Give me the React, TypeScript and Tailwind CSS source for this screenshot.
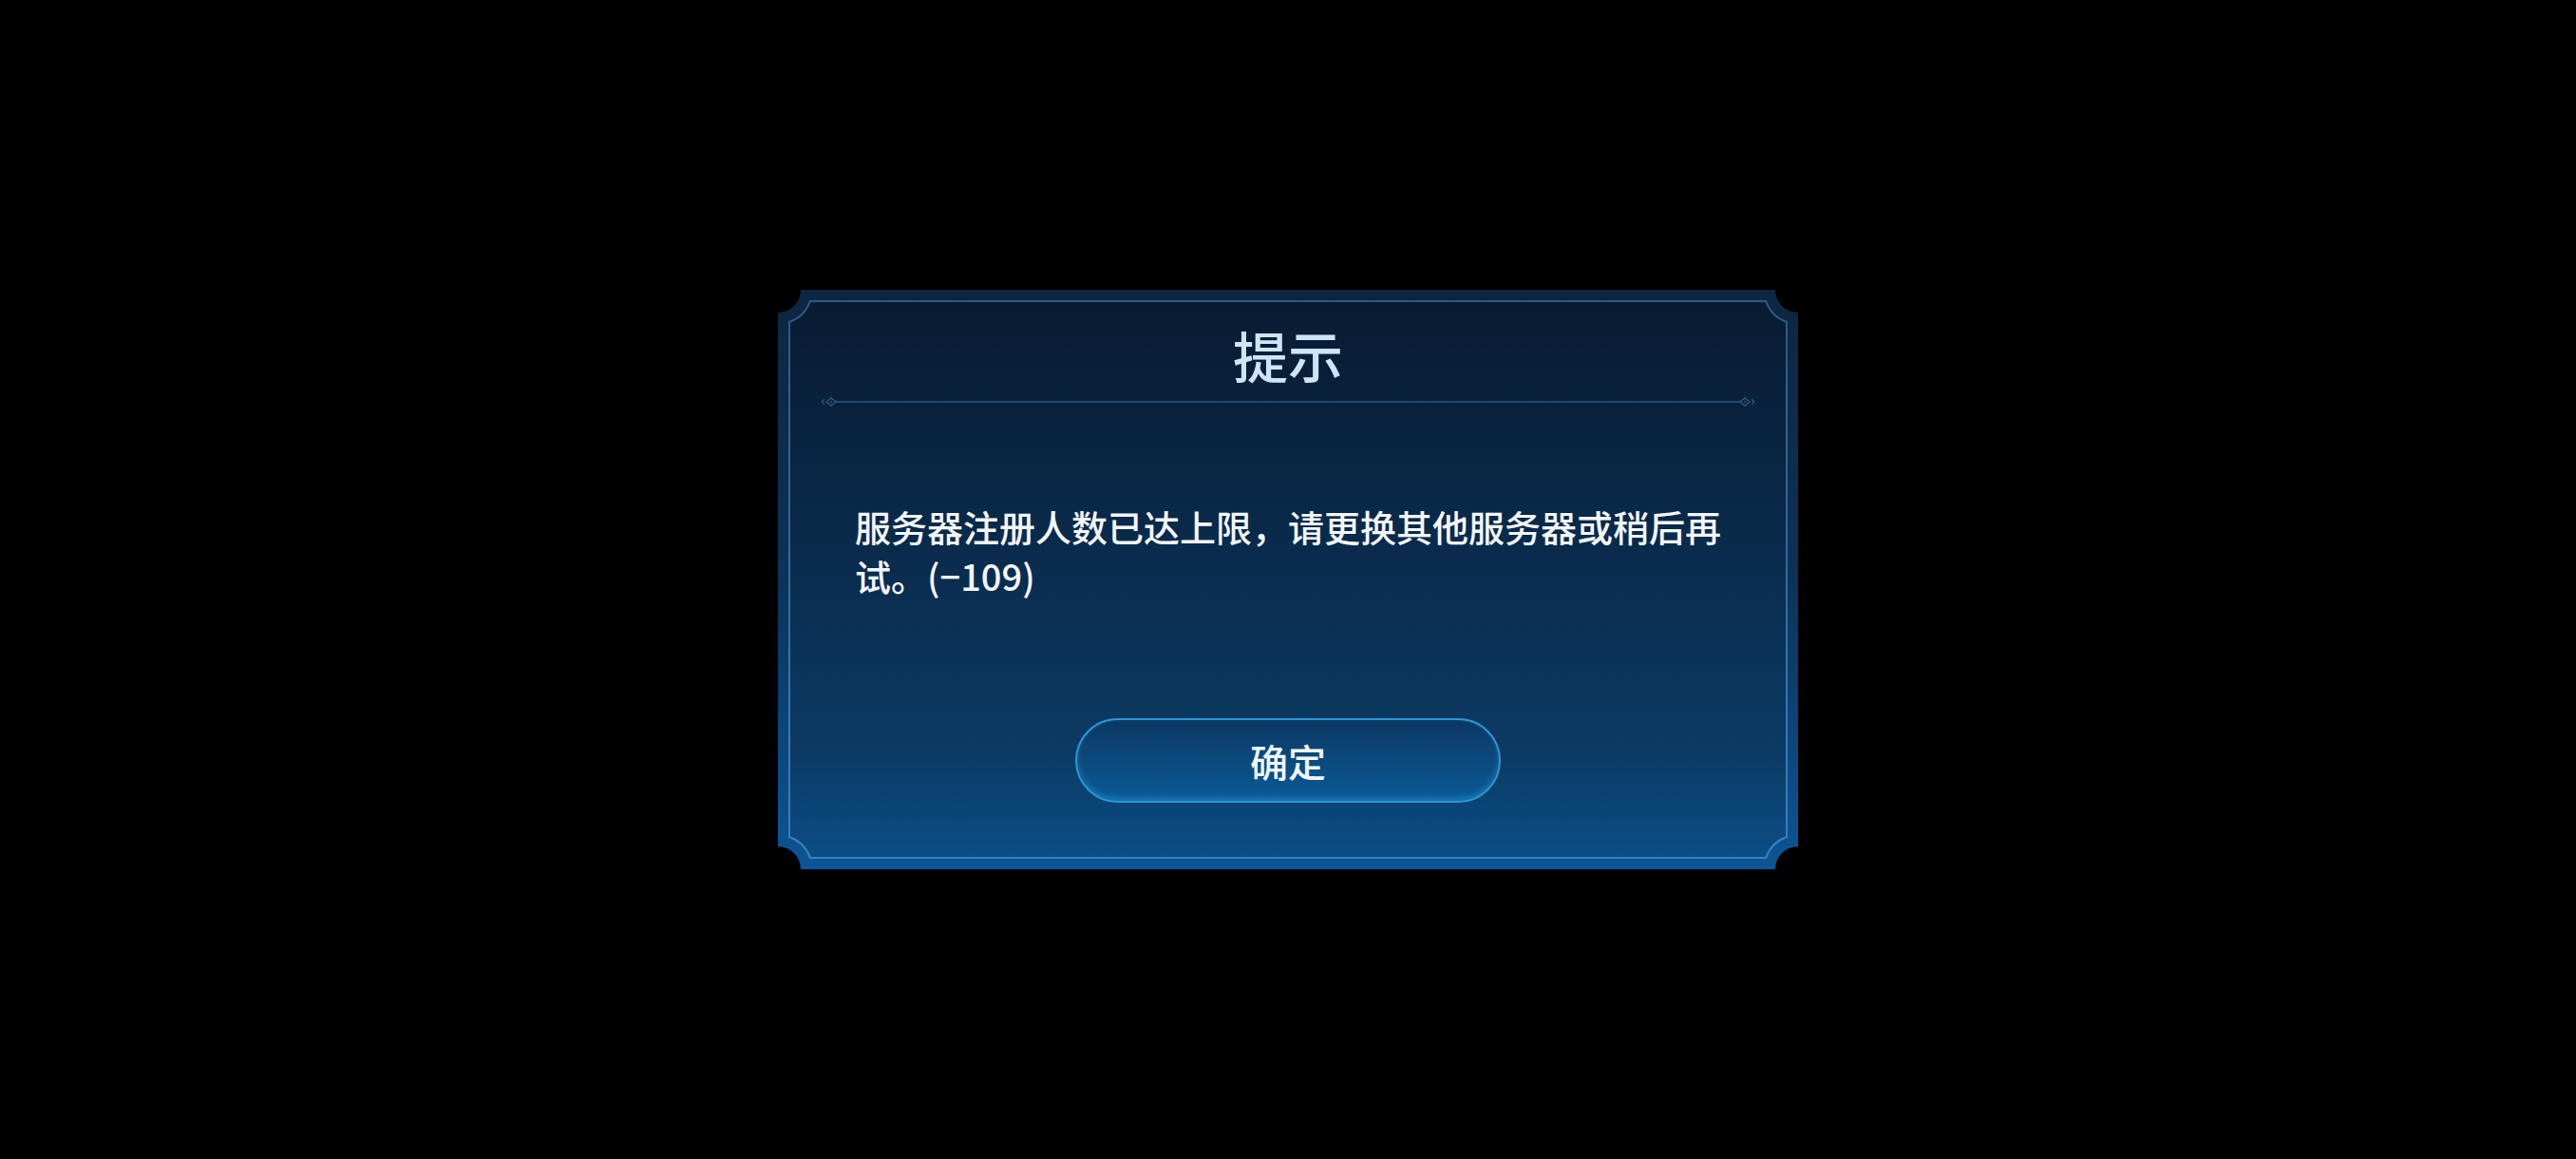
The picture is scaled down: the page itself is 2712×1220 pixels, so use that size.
import React from "react";

function Frame() {
  const W = 1074;
  const H = 610;
  const r = 24;
  const d = 12;
  const R = 36;
  const e = Math.sqrt(R * R - d * d);
  const outer = `M ${r} 0 L ${W - r} 0 A ${r} ${r} 0 0 0 ${W} ${r} L ${W} ${H - r} A ${r} ${r} 0 0 0 ${W - r} ${H} L ${r} ${H} A ${r} ${r} 0 0 0 0 ${H - r} L 0 ${r} A ${r} ${r} 0 0 0 ${r} 0 Z`;
  const inner = `M ${e} ${d} L ${W - e} ${d} A ${R} ${R} 0 0 0 ${W - d} ${e} L ${W - d} ${H - e} A ${R} ${R} 0 0 0 ${W - e} ${H - d} L ${e} ${H - d} A ${R} ${R} 0 0 0 ${d} ${H - e} L ${d} ${e} A ${R} ${R} 0 0 0 ${e} ${d} Z`;
  return (
    <svg className="absolute inset-0" width={W} height={H} viewBox={`0 0 ${W} ${H}`}>
      <defs>
        <linearGradient id="bandG" x1="0" y1="0" x2="0" y2="1">
          <stop offset="0" stopColor="#0d2640" />
          <stop offset="0.5" stopColor="#0b3358" />
          <stop offset="1" stopColor="#0c5596" />
        </linearGradient>
        <linearGradient id="fillG" x1="0" y1="0" x2="0" y2="1">
          <stop offset="0" stopColor="#081b31" />
          <stop offset="0.45" stopColor="#0a2b4c" />
          <stop offset="0.8" stopColor="#0b3a64" />
          <stop offset="1" stopColor="#0b4d85" />
        </linearGradient>
        <linearGradient id="lineG" x1="0" y1="0" x2="0" y2="1">
          <stop offset="0" stopColor="#2a5a84" />
          <stop offset="1" stopColor="#3a80bc" />
        </linearGradient>
      </defs>
      <path d={outer} fill="url(#bandG)" />
      <path d={inner} fill="url(#fillG)" stroke="url(#lineG)" strokeWidth="2" />
    </svg>
  );
}

function Ornament({ flip }: { flip?: boolean }) {
  return (
    <svg width="24" height="12" viewBox="0 0 24 12" className={flip ? "shrink-0 -scale-x-100" : "shrink-0"}>
      <path d="M1 6 L4 3.5 M1 6 L4 8.5" stroke="#2c5a80" strokeWidth="1.4" fill="none" />
      <path d="M6 6 L11 2 L16 6 L11 10 Z" stroke="#2c5a80" strokeWidth="1.4" fill="none" />
      <path d="M9.5 6 L11 4.8 L12.5 6 L11 7.2 Z" fill="#2c5a80" />
      <path d="M16 6 L24 6" stroke="#1f4a70" strokeWidth="2" />
    </svg>
  );
}

export default function App() {
  return (
    <div className="w-[2712px] h-[1220px] bg-black flex items-center justify-center">
      <div
        className="relative w-[1074px] h-[610px] flex flex-col"
        style={{ fontFamily: '"Noto Sans CJK SC", "Noto Sans", sans-serif' }}
      >
        <Frame />
        <div className="relative flex flex-col items-center h-full">
          <div className="pt-[39px] text-[58px] leading-[58px] font-medium text-[#cde6f7]">提示</div>
          <div className="mt-[15px] w-[984px] flex items-center">
            <Ornament />
            <div className="flex-1 h-[2px] bg-[#1f4a70]" />
            <Ornament flip />
          </div>
          <div className="mt-[99px] self-start pl-[81px] w-[1010px] text-[38px] leading-[52px] font-medium text-[#f2f6fa]">
            服务器注册人数已达上限，请更换其他服务器或稍后再试。(−109)
          </div>
          <div className="flex-1" />
          <button className="mb-[70px] w-[448px] h-[89px] rounded-full border-2 border-[#2a98d6] bg-gradient-to-b from-[#0b3762] to-[#0a5b98] shadow-[inset_0_-3px_6px_rgba(60,180,240,0.35)] text-[40px] leading-none font-medium text-[#eef6fc] flex items-center justify-center">
            确定
          </button>
        </div>
      </div>
    </div>
  );
}
